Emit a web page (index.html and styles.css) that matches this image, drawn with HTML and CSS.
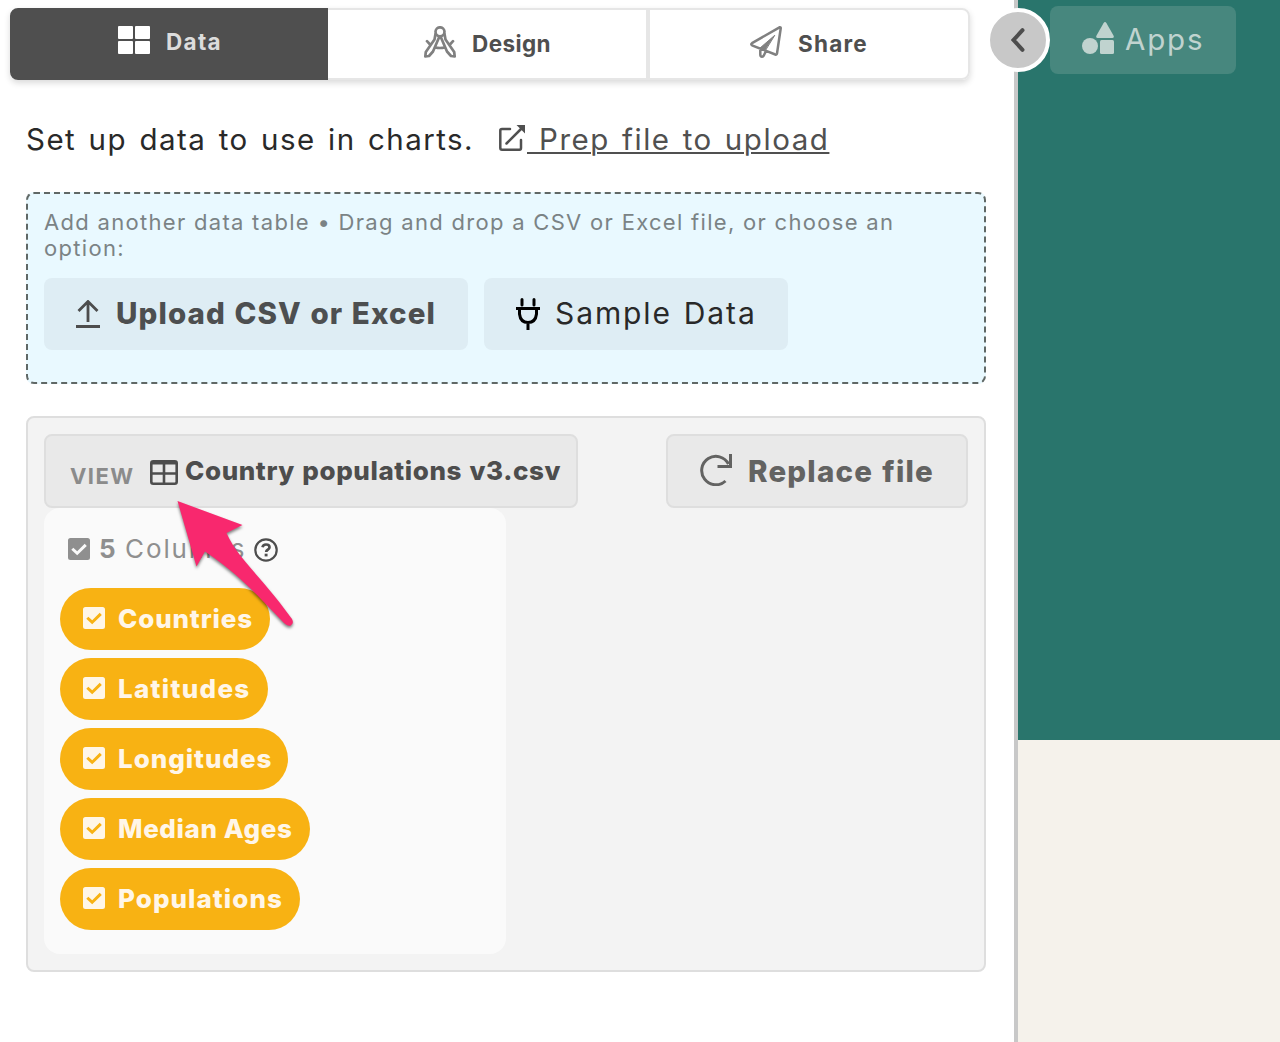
FILE: index.html
```html
<!DOCTYPE html>
<html lang="en">
<head>
<meta charset="utf-8">
<title>Chart data</title>
<link rel="stylesheet" href="styles.css">
</head>
<body>
<svg width="0" height="0" class="defs" aria-hidden="true">
  <symbol id="checkbox" viewBox="0 0 22 22"><path fill-rule="evenodd" fill="currentColor" d="M2.500 0h17A2.500 2.500 0 0 1 22 2.500v17a2.500 2.500 0 0 1-2.500 2.500h-17A2.500 2.500 0 0 1 0 19.500v-17A2.500 2.500 0 0 1 2.500 0zM5.300 9.700 3.300 11.800 9.200 17.300 18.800 7.900 16.700 5.700 9.200 13.300z"/></symbol>
</svg>
<div class="app">
  <main class="editor">
    <nav class="tabs">
      <a class="tab tab-active"><svg width="32" height="28" viewBox="0 0 32 28" fill="#fff"><rect width="15" height="13" rx="1"/><rect x="17" width="15" height="13" rx="1"/><rect y="15" width="15" height="13" rx="1"/><rect x="17" y="15" width="15" height="13" rx="1"/></svg><span class="t-data">Data</span></a>
      <a class="tab tab-design"><svg width="32" height="32" viewBox="0 0 32 32" fill="none" stroke="#808080" stroke-width="2.700" stroke-linecap="round" stroke-linejoin="round"><circle cx="16" cy="5.800" r="4.500"/><path d="M11.500 8 10.500 13.500 1.800 26 1.300 30.500 5 30 9 25.500 14.800 12M20.500 8 21.500 13.500 30.200 26 30.700 30.500 27 30 23 25.500 17.200 12M3 15.200 6.500 19M29 15.200 25.500 19M11 21.200Q16 22.800 21 21.200"/></svg><span class="t-design">Design</span></a>
      <a class="tab tab-share"><svg width="32" height="32" viewBox="0 0 32 32" fill="none" stroke="#808080" stroke-width="2.500" stroke-linecap="round" stroke-linejoin="round"><path d="M29.500 1.300Q31 1 30.700 2.500L27 27.500Q26.700 29 25.300 28.500L2 19.300Q.5 18.300 2 17.200zM10.300 23v5.500q0 2.200 1.700 2.200 1.300 0 1.800-1.200l2.200-4.500"/><path d="M24.500 9.500 10 22 15 24.500z" fill="#808080" stroke-width="1"/></svg><span class="t-share">Share</span></a>
    </nav>

    <header class="intro">
      <span class="intro-text">Set up data to use in charts.</span>
      <svg class="external" width="28" height="28" viewBox="0 0 28 28" fill="none" stroke="#505050" stroke-width="2.500"><path d="M12 5H4Q2.300 5 2.300 6.500V24Q2.300 25.700 4 25.700H21.500Q23 25.700 23 24V16" stroke-linecap="round"/><path d="m8.500 19.500 15-15" stroke-linecap="round"/><path d="M18.500 1H27v8.500z" fill="#505050" stroke="none"/></svg>
      <a class="prep">&nbsp;Prep file to upload</a>
    </header>

    <section class="dropzone">
      <p class="hint"><span class="hint-a">Add another data table • Drag and drop a CSV or Excel file, or choose an</span><br>option:</p>
      <div class="actions">
        <a class="action upload"><svg width="24" height="28" viewBox="0 0 24 28" fill="none" stroke="#4d4d4d" stroke-width="2.800"><path d="M12 22V2M2.500 11 12 1.500 21.500 11M0 26.500h24"/></svg><span class="t-upload">Upload CSV or Excel</span></a>
        <a class="action sample"><svg width="24" height="32" viewBox="0 0 24 32" fill="none" stroke="#000" stroke-width="3"><path d="M6 1.500V7M18 1.500V7" stroke-linecap="round"/><path d="M0 10.500h24M3.500 11v5q1 8.500 8.500 8.500t8.500-8.500v-5M12 25v7"/></svg><span class="t-sample">Sample Data</span></a>
      </div>
    </section>

    <section class="table-card">
      <div class="file-row">
        <a class="file-button view"><span class="view-label">VIEW</span><svg width="28" height="25" viewBox="0 0 28 25" fill="none" stroke="#4d4d4d" stroke-width="2.600"><rect x="1.300" y="1.300" width="25.400" height="22.400" rx="2"/><path d="M1 3h26" stroke-width="3"/><path d="M14 3v20M1 13.500h26"/></svg><span class="t-file">Country populations v3.csv</span></a>
        <a class="file-button replace"><svg width="33" height="33" viewBox="0 0 33 33" fill="none" stroke="#636362" stroke-width="3"><path d="M26.500 28A14.200 14.200 0 1 1 29.500 11M31.500 1v12.500H18.500"/></svg><span class="t-replace">Replace file</span></a>
      </div>
      <div class="columns">
        <div class="columns-head"><svg width="22" height="22"><use href="#checkbox"/></svg><b>5</b><span class="t-columns">Columns</span><svg class="help" width="24" height="24" viewBox="0 0 24 24" fill="none" stroke="#4d4d4d" stroke-width="2.200"><circle cx="12" cy="12" r="10.700"/><path d="M8.500 9.200Q9 6.500 12 6.500q3.500 0 3.500 2.700 0 1.600-1.800 2.600-1.500.8-1.500 2.300" stroke-width="2.700"/><path d="M12.100 15.700v2.700" stroke-width="2.900"/></svg></div>
        <div class="chips">
          <a class="chip countries"><svg width="22" height="22"><use href="#checkbox"/></svg><span>Countries</span></a>
          <a class="chip latitudes"><svg width="22" height="22"><use href="#checkbox"/></svg><span>Latitudes</span></a>
          <a class="chip longitudes"><svg width="22" height="22"><use href="#checkbox"/></svg><span>Longitudes</span></a>
          <a class="chip ages"><svg width="22" height="22"><use href="#checkbox"/></svg><span>Median Ages</span></a>
          <a class="chip populations"><svg width="22" height="22"><use href="#checkbox"/></svg><span>Populations</span></a>
        </div>
        <svg class="pointer" width="130" height="142" viewBox="170 494 130 142"><path fill="#f8286e" d="M177.500 501 242.500 525 226.500 533C238 559 263 578 292 619Q294.500 624 290 626Q287 626 284 623C262 600 240 575 205 551.500L196.500 566.500z"/></svg>
      </div>
    </section>
  </main>

  <aside class="preview">
    <div class="canvas">
      <a class="apps"><svg width="32" height="32" viewBox="0 0 32 32" fill="#c0d3cf"><path d="M21.500 1.200q1.500-2.200 3 0L31.500 13.500q1 2.300-1.200 2.500H15.700q-2.200-.2-1.200-2.500z"/><circle cx="8" cy="24" r="8"/><rect x="18" y="18" width="14" height="14" rx="1.500"/></svg><span class="t-apps">Apps</span></a>
    </div>
    <a class="collapse"><svg width="14" height="24" viewBox="0 0 14 24" fill="none" stroke="#4d4d4d" stroke-width="4" stroke-linecap="round"><path d="M11.500 2.200 2.500 12l9 9.800"/></svg></a>
  </aside>
</div>
</body>
</html>
```
FILE: styles.css
```css
* { box-sizing: border-box; }
body { margin: 0; background: #fff; font-family: Inter, "Liberation Sans", sans-serif; color: #292929; }
svg { display: block; flex: none; }
.defs { position: absolute; }
span, a, b { white-space: nowrap; }
.app { display: flex; width: 1280px; height: 1042px; overflow: hidden; }
.editor { width: 1014px; flex: none; padding-top: 8px; }

.tabs { display: flex; width: 960px; height: 72px; margin-left: 10px; border-radius: 8px; box-shadow: 0 3px 6px rgba(0,0,0,.15); }
.tab { display: flex; align-items: center; width: 320px; border: 2px solid #e6e6e6; background: #fff; color: #4f4f4f; font-size: 22.500px; font-weight: 700; line-height: 28px; padding: 0 0 4px 94px; gap: 16px; }
.tab-active { width: 318px; background: #4f4f4f; border-color: #4f4f4f; color: #dcdcdc; border-radius: 8px 0 0 8px; padding: 0 0 8px 106px; }
.tab-design { border-left: 0; padding-left: 96px; }
.tab-share { width: 322px; border-radius: 0 8px 8px 0; padding-left: 100px; }
.tab span { padding-top: 4px; }
.t-data { letter-spacing: 1.300px; }
.t-design { letter-spacing: .4px; }
.t-share { letter-spacing: 1.200px; }

.intro { display: flex; align-items: center; height: 40px; margin: 39px 0 0 26px; font-size: 29.500px; line-height: 40px; }
.intro-text { width: 472px; letter-spacing: 1.450px; word-spacing: 2.700px; }
.external { margin: 0 1px 2px 0; }
.prep { color: #505050; letter-spacing: 1.550px; word-spacing: 2.200px; text-decoration: underline; text-decoration-thickness: 2px; text-underline-offset: 2px; }

.dropzone { width: 960px; height: 192px; margin: 33px 0 0 26px; padding: 15px 16px; border: 2px dashed #606866; border-radius: 8px; background: #e9f9ff; }
.hint { margin: 0; color: #7b8385; font-size: 22px; line-height: 26px; letter-spacing: 1.300px; }
.actions { display: flex; gap: 16px; margin-top: 17px; }
.action { display: flex; align-items: center; height: 72px; padding-left: 32px; gap: 16px; border-radius: 8px; background: #deedf4; font-size: 29.500px; }
.action span { padding-bottom: 2px; }
.upload { width: 424px; color: #4d4f50; font-weight: 800; letter-spacing: 1.100px; word-spacing: 1px; }
.sample { width: 304px; gap: 15px; font-size: 30px; letter-spacing: 1.900px; word-spacing: 1.500px; }

.table-card { width: 960px; height: 556px; margin: 32px 0 0 26px; padding: 16px; border: 2px solid #dedede; border-radius: 8px; background: #f3f3f3; }
.file-row { display: flex; justify-content: space-between; }
.file-button { display: flex; align-items: center; height: 74px; border: 2px solid #dedede; border-radius: 8px; background: #e9e9e9; font-weight: 800; }
.view { width: 534px; padding-left: 24px; font-size: 26px; color: #4d4d4d; }
.view-label { width: 80px; padding-top: 10px; font-size: 22px; font-weight: 700; letter-spacing: 1.400px; color: #8b8b8b; }
.t-file { margin-left: 7px; padding-bottom: 2px; letter-spacing: .6px; word-spacing: 1px; }
.view svg { margin-top: 2px; }
.replace { width: 302px; padding-left: 31px; gap: 16px; color: #636362; font-size: 29.500px; }
.t-replace { letter-spacing: 1.200px; word-spacing: 1.500px; }
.replace svg { margin-top: -3px; }
.columns { position: relative; width: 462px; height: 446px; padding: 24px 16px 0; border-radius: 16px; background: #fafafa; }
.columns-head { display: flex; align-items: center; height: 34px; padding-left: 8px; font-size: 26px; color: #8f8f8f; }
.columns-head b { width: 26px; margin-left: 9px; padding-bottom: 2px; }
.t-columns { width: 121px; padding-bottom: 2px; letter-spacing: 1.900px; }
.help { margin: 2px 0 0 8px; }
.chips { display: flex; flex-direction: column; gap: 8px; margin-top: 22px; }
.chip { display: flex; align-items: center; height: 62px; padding-left: 23px; gap: 13px; border-radius: 31px; background: #f8b213; color: #fff6e8; font-size: 26px; font-weight: 800; letter-spacing: .85px; }
.chip svg { margin-top: -2px; }
.chip span { padding-bottom: 2px; }
.countries { width: 210px; }
.latitudes { width: 208px; letter-spacing: 1.300px; }
.longitudes { width: 228px; letter-spacing: .95px; }
.ages { width: 250px; letter-spacing: .6px; }
.populations { width: 240px; letter-spacing: 1.050px; }
.pointer { position: absolute; left: 126px; top: -14px; filter: drop-shadow(0 2px 1.500px rgba(0,0,0,.5)); }

.preview { position: relative; flex: 1; border-left: 4px solid #c8c8c8; background: #f5f2eb; }
.canvas { height: 740px; padding: 6px 0 0 32px; background: #29756c; }
.apps { display: flex; align-items: center; width: 186px; height: 68px; padding: 0 0 4px 32px; gap: 11px; border-radius: 8px; background: #47877e; color: #c0d3cf; font-size: 29.500px; letter-spacing: 1.800px; }
.t-apps { padding-top: 2px; }
.collapse { position: absolute; left: -32px; top: 8px; display: flex; align-items: center; justify-content: center; width: 64px; height: 64px; border: 4px solid #fff; border-radius: 50%; background: #c8c8c8; }
```
